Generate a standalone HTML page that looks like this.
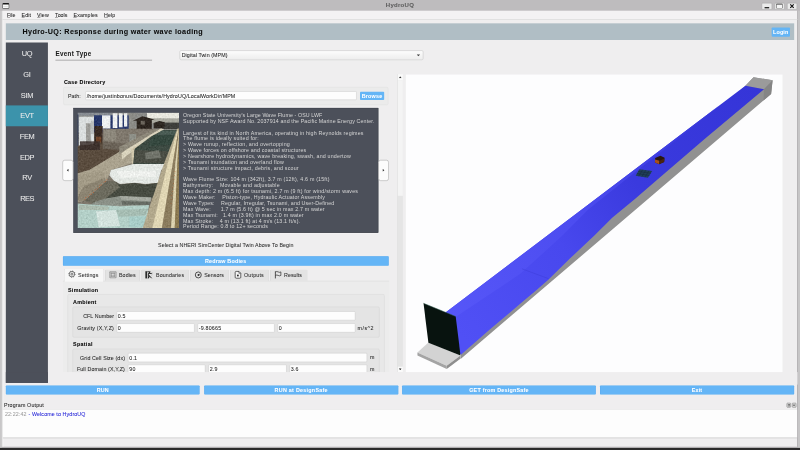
<!DOCTYPE html>
<html><head><meta charset="utf-8"><title>HydroUQ</title>
<style>
html,body{margin:0;padding:0;background:#bdbdbd;overflow:hidden;}
body{width:800px;height:450px;font-family:"Liberation Sans",sans-serif;}
#root{position:absolute;left:0;top:0;width:1920px;height:1080px;transform:scale(0.4166667);transform-origin:0 0;overflow:hidden;}
.b{position:absolute;}
.t{position:absolute;white-space:pre;line-height:1;font-family:"Liberation Sans",sans-serif;-webkit-text-stroke:0.12px currentColor;}
</style></head><body><div id="root">
<div class="b" style="left:0.00px;top:0.00px;width:1920.00px;height:1080.00px;background:#bebcbe;"></div>
<div class="b" style="left:6.00px;top:25.68px;width:1906.56px;height:1046.16px;background:#efeeef;"></div>
<div class="b" style="left:1912.56px;top:25.68px;width:2.16px;height:1046.16px;background:#b2b0b2;"></div>
<div class="b" style="left:0.00px;top:25.68px;width:3.84px;height:1049.52px;background:#c8c7c8;"></div>
<div class="b" style="left:3.84px;top:25.68px;width:2.64px;height:1046.16px;background:#dcdbdc;"></div>
<div class="b" style="left:6.48px;top:25.68px;width:1.44px;height:1046.16px;background:#f8f8f8;"></div>
<div class="b" style="left:1914.72px;top:25.68px;width:5.28px;height:1049.52px;background:#c6c5c6;"></div>
<div class="b" style="left:7.92px;top:25.68px;width:1904.64px;height:20.64px;background:#f3f2f3;"></div>
<div class="b" style="left:0.00px;top:1075.20px;width:1920.00px;height:4.80px;background:#2b2b2b;"></div>
<div class="t" style="left:926.08px;top:5.29px;font-size:14.45px;letter-spacing:0.631px;color:#5c5c5c;font-weight:bold;">HydroUQ</div>
<div class="b" style="left:5.52px;top:6.72px;width:16.80px;height:14.64px;background:#fafafa;border:1.56px solid #1a1a1a;border-radius:2.40px;border-top-width:4.56px;box-sizing:border-box;"></div>
<div class="b" style="left:8.16px;top:15.12px;width:11.52px;height:1.20px;background:#c8c8c8;"></div>
<div class="b" style="left:1827.60px;top:6.72px;width:25.20px;height:16.56px;background:#ebebeb;border:1.08px solid #9c9c9c;border-radius:2.16px;box-sizing:border-box;"></div>
<div class="b" style="left:1858.80px;top:6.72px;width:24.00px;height:16.56px;background:#ebebeb;border:1.08px solid #9c9c9c;border-radius:2.16px;box-sizing:border-box;"></div>
<div class="b" style="left:1888.80px;top:6.72px;width:24.00px;height:16.56px;background:#ebebeb;border:1.08px solid #9c9c9c;border-radius:2.16px;box-sizing:border-box;"></div>
<div class="b" style="left:1835.04px;top:17.28px;width:10.56px;height:2.88px;background:#1c1c1c;"></div>
<div class="b" style="left:1863.12px;top:9.36px;width:15.12px;height:10.32px;background:#f4f4f4;border:1.44px solid #222;box-sizing:border-box;border-top-width:2.88px;border-radius:1.2px"></div>
<svg class="b" style="left:1895.04px;top:9.36px;width:11.52px;height:11.52px" viewBox="0 0 5 5"><path d="M0.7 0.7L4.3 4.3M4.3 0.7L0.7 4.3" stroke="#141414" stroke-width="1.25"/></svg>
<div class="b" style="left:6.00px;top:46.32px;width:1908.00px;height:1.68px;background:#dedede;"></div>
<div class="t" style="left:16.80px;top:30.75px;font-size:12.72px;letter-spacing:-0.104px;color:#222;">File</div>
<div class="b" style="left:16.80px;top:42.48px;width:6.90px;height:0.96px;background:#444;"></div>
<div class="t" style="left:51.60px;top:30.75px;font-size:12.72px;letter-spacing:0.330px;color:#222;">Edit</div>
<div class="b" style="left:51.60px;top:42.48px;width:7.58px;height:0.96px;background:#444;"></div>
<div class="t" style="left:88.80px;top:30.75px;font-size:12.72px;letter-spacing:0.284px;color:#222;">View</div>
<div class="b" style="left:88.80px;top:42.48px;width:8.21px;height:0.96px;background:#444;"></div>
<div class="t" style="left:132.00px;top:30.75px;font-size:12.72px;letter-spacing:-0.027px;color:#222;">Tools</div>
<div class="b" style="left:132.00px;top:42.48px;width:7.33px;height:0.96px;background:#444;"></div>
<div class="t" style="left:176.40px;top:30.75px;font-size:12.72px;letter-spacing:0.308px;color:#222;">Examples</div>
<div class="b" style="left:176.40px;top:42.48px;width:7.58px;height:0.96px;background:#444;"></div>
<div class="t" style="left:249.60px;top:30.75px;font-size:12.72px;letter-spacing:0.299px;color:#222;">Help</div>
<div class="b" style="left:249.60px;top:42.48px;width:9.02px;height:0.96px;background:#444;"></div>
<div class="b" style="left:14.40px;top:56.40px;width:1891.20px;height:39.60px;background:#b0bec5;"></div>
<div class="t" style="left:54.00px;top:68.24px;font-size:17.20px;letter-spacing:0.882px;color:#0a0a0a;font-weight:bold;">Hydro-UQ: Response during water wave loading</div>
<div class="b" style="left:1851.60px;top:66.00px;width:44.40px;height:21.60px;background:#64b5f6;border-radius:1.92px;"></div>
<div class="t" style="left:1855.23px;top:72.36px;font-size:12.90px;letter-spacing:0.407px;color:#fff;font-weight:bold;">Login</div>
<div class="b" style="left:14.40px;top:102.00px;width:100.80px;height:817.20px;background:#4c505a;"></div>
<div class="b" style="left:14.40px;top:252.72px;width:100.80px;height:50.40px;background:#3c93ab;"></div>
<div class="t" style="left:52.04px;top:120.53px;font-size:17.81px;letter-spacing:-0.596px;color:#ececec;">UQ</div>
<div class="t" style="left:55.81px;top:170.33px;font-size:17.81px;letter-spacing:-0.413px;color:#ececec;">GI</div>
<div class="t" style="left:49.74px;top:220.13px;font-size:17.81px;letter-spacing:-0.516px;color:#ececec;">SIM</div>
<div class="t" style="left:48.61px;top:269.93px;font-size:17.81px;letter-spacing:-0.755px;color:#ececec;">EVT</div>
<div class="t" style="left:47.41px;top:319.73px;font-size:17.81px;letter-spacing:-0.939px;color:#ececec;">FEM</div>
<div class="t" style="left:47.96px;top:369.53px;font-size:17.81px;letter-spacing:-0.978px;color:#ececec;">EDP</div>
<div class="t" style="left:53.68px;top:419.33px;font-size:17.81px;letter-spacing:-1.085px;color:#ececec;">RV</div>
<div class="t" style="left:48.32px;top:469.13px;font-size:17.81px;letter-spacing:-1.222px;color:#ececec;">RES</div>
<div class="t" style="left:133.20px;top:121.66px;font-size:15.05px;letter-spacing:0.707px;color:#1a1a1a;font-weight:bold;">Event Type</div>
<div class="b" style="left:133.20px;top:143.04px;width:231.60px;height:3.12px;background:#b9b9b9;"></div>
<div class="b" style="left:430.56px;top:120.72px;width:585.60px;height:22.80px;background:linear-gradient(#fdfdfd,#ededed);border:1.08px solid #bcbcbc;border-radius:3.60px;box-sizing:border-box;"></div>
<div class="t" style="left:436.08px;top:126.51px;font-size:12.72px;letter-spacing:0.192px;color:#222;">Digital Twin (MPM)</div>
<svg class="b" style="left:1000.32px;top:129.60px;width:8.40px;height:5.52px" viewBox="0 0 3.5 2.3"><path d="M0 0H3.5L1.75 2.3Z" fill="#4a4a4a"/></svg>
<div class="b" style="left:954.24px;top:178.32px;width:12.72px;height:714.48px;background:#e5e5e5;"></div>
<div class="b" style="left:954.24px;top:193.20px;width:12.72px;height:277.20px;background:#f4f4f4;"></div>
<div class="b" style="left:954.24px;top:178.32px;width:12.72px;height:14.64px;background:#fafafa;"></div>
<div class="b" style="left:954.24px;top:880.08px;width:12.72px;height:12.72px;background:#fafafa;"></div>
<div class="b" style="left:953.52px;top:178.32px;width:1.20px;height:714.48px;background:#d8d8d8;"></div>
<svg class="b" style="left:957.12px;top:183.12px;width:7.20px;height:4.80px" viewBox="0 0 3 2"><path d="M0 2H3L1.5 0Z" fill="#333"/></svg>
<svg class="b" style="left:957.12px;top:883.68px;width:7.20px;height:4.80px" viewBox="0 0 3 2"><path d="M0 0H3L1.5 2Z" fill="#333"/></svg>
<div class="t" style="left:153.60px;top:191.88px;font-size:12.90px;letter-spacing:0.591px;color:#000;font-weight:bold;">Case Directory</div>
<div class="b" style="left:152.40px;top:208.80px;width:780.00px;height:43.20px;background:#ebebeb;border:0.96px solid #dddddd;border-radius:3.60px;box-sizing:border-box;"></div>
<div class="t" style="left:163.20px;top:224.43px;font-size:12.72px;letter-spacing:0.141px;color:#242424;">Path:</div>
<div class="b" style="left:205.20px;top:218.88px;width:650.40px;height:21.60px;background:#fdfdfd;border:0.96px solid #c2c2c2;border-radius:2.40px;box-sizing:border-box;"></div>
<div class="t" style="left:208.08px;top:224.43px;font-size:12.72px;letter-spacing:0.315px;color:#222;">/home/justinbonus/Documents/HydroUQ/LocalWorkDir/MPM</div>
<div class="b" style="left:864.00px;top:219.60px;width:57.60px;height:20.40px;background:#64b5f6;border-radius:1.92px;"></div>
<div class="t" style="left:867.96px;top:224.28px;font-size:12.90px;letter-spacing:0.513px;color:#fff;font-weight:bold;">Browse</div>
<div class="b" style="left:175.20px;top:258.24px;width:734.40px;height:301.92px;background:#fafafa;"></div>
<div class="b" style="left:176.40px;top:259.20px;width:732.00px;height:299.52px;background:#4c505a;border:1.2px solid #3a3d45;box-sizing:border-box;"></div>
<svg class="b" style="left:186.00px;top:270.00px;width:243.60px;height:277.20px" viewBox="0 0 101.5 115.5" preserveAspectRatio="none">
<defs><filter id="pb" x="-5%" y="-5%" width="110%" height="110%" color-interpolation-filters="sRGB"><feGaussianBlur in="SourceGraphic" stdDeviation="0.7" result="b"/><feTurbulence type="fractalNoise" baseFrequency="0.55" numOctaves="2" seed="7" result="n"/><feColorMatrix in="n" type="matrix" values="0.4 0.4 0.2 0 0  0.4 0.4 0.2 0 0  0.4 0.4 0.2 0 0  0 0 0 0 1" result="g"/><feComposite in="b" in2="g" operator="arithmetic" k1="0" k2="1" k3="0.28" k4="-0.14"/></filter><clipPath id="pc"><rect x="0" y="0" width="101.5" height="115.5"/></clipPath></defs>
<g clip-path="url(#pc)"><g filter="url(#pb)">
<rect x="-2.0" y="-2.0" width="105.5" height="119.5" fill="#7d766a"/>
<rect x="-2.0" y="-2.0" width="105.5" height="22.0" fill="#8c8d8a"/>
<rect x="-2.0" y="-2.0" width="37.0" height="5.2" fill="#878c92"/>
<rect x="1.4" y="4.2" width="15.1" height="28.7" fill="#d9dddd"/>
<rect x="-1.0" y="2.0" width="1.8" height="44.0" fill="#1f2f5e"/>
<rect x="8.5" y="10.8" width="4.7" height="20.0" fill="#9c9c98"/>
<rect x="13.4" y="8.2" width="3.1" height="13.3" fill="#b9bcbc"/>
<rect x="16.5" y="2.8" width="36.0" height="17.0" fill="#26366a"/>
<rect x="24.5" y="2.8" width="8.4" height="13.3" fill="#eef0f0"/>
<rect x="35.2" y="0.8" width="4.7" height="14.7" fill="#eef0f0"/>
<rect x="41.4" y="0.8" width="3.7" height="14.0" fill="#eef0f0"/>
<rect x="46.5" y="0.8" width="3.3" height="13.3" fill="#eef0f0"/>
<rect x="16.9" y="13.5" width="8.3" height="24.0" fill="#3a2c24"/>
<rect x="18.5" y="24.2" width="5.3" height="13.3" fill="#7a4a2a" opacity="0.8"/>
<rect x="51.2" y="0.8" width="6.7" height="16.7" fill="#8b8b86"/>
<rect x="69.5" y="0.3" width="32.9" height="5.9" fill="#e9e8df"/>
<rect x="74.0" y="6.0" width="28.4" height="4.9" fill="#a9a99f"/>
<rect x="86.3" y="10.1" width="16.1" height="6.5" fill="#3e3e3a"/>
<polygon points="55.3,8.3 65.0,3.8 77.2,7.0 74.3,7.5 74.3,17.0 59.2,17.0 59.2,8.3" fill="#2c251f"/>
<rect x="63.2" y="8.3" width="4.1" height="3.9" fill="#7a746a" opacity="0.8"/>
<polygon points="76.0,10.5 81.8,8.5 87.2,9.8 86.9,15.9 76.3,15.9" fill="#2e2822"/>
<polygon points="25.2,16.2 78.5,16.2 73.2,22.2 51.8,33.5 25.2,30.8" fill="#7f786d"/>
<rect x="51.8" y="21.5" width="6.7" height="10.7" fill="#8e9088"/>
<rect x="26.5" y="17.5" width="12.0" height="10.7" fill="#8d887c"/>
<polygon points="0.1,33.5 16.5,31.5 25.2,29.5 51.8,32.4 37.2,42.2 11.8,57.5 0.5,60.8 -4.2,61.5 -4.2,33.5" fill="#5a4c3e"/>
<polygon points="25.2,28.8 51.8,31.5 42.5,37.5 25.2,36.2" fill="#6b6358"/>
<rect x="2.5" y="28.8" width="20.0" height="8.7" fill="#3a2e2a" opacity="0.85"/>
<polygon points="83.8,15.9 85.8,17.5 67.8,29.5 55.8,36.2 54.5,50.8 33.4,57.5 29.2,68.2 6.5,88.2 -4.2,90.8 -4.2,61.5 0.5,60.8 11.8,57.5 37.2,42.2 51.8,32.4 73.2,21.5" fill="#aaa28e"/>
<polygon points="83.3,16.0 49.5,36.5 41.8,42.1 41.8,34.3 49.5,30.5 75.3,17.3" fill="#8e897b"/>
<polygon points="83.3,15.9 86.5,17.0 57.5,37.2 49.5,42.7 44.3,47.2 44.3,40.5 49.5,36.7" fill="#d8d2bc"/>
<polygon points="0.5,62.8 25.2,58.8 28.5,67.5 6.5,87.5 -4.2,90.2" fill="#a29a86"/>
<polygon points="6.5,73.5 27.2,65.5 28.5,68.2 6.5,87.9 -2.8,89.5" fill="#8c8472"/>
<polygon points="85.2,17.2 73.2,24.2 57.2,36.2 55.8,50.8 54.5,51.5 53.8,36.2 67.8,28.8" fill="#cfc5aa"/>
<polygon points="85.8,17.5 100.5,17.5 97.2,28.2 91.8,37.5 90.5,52.2 55.8,52.2 57.2,36.2 73.2,24.2" fill="#3d4a42"/>
<polygon points="75.8,22.8 97.2,22.2 94.5,32.2 70.5,33.5" fill="#34483f" opacity="0.9"/>
<polygon points="83.8,18.2 99.2,18.2 97.8,22.2 78.5,22.2" fill="#4f625a" opacity="0.8"/>
<polygon points="57.2,37.5 90.5,38.8 89.2,50.8 56.5,50.8" fill="#4a4d44"/>
<polygon points="67.8,40.2 81.2,37.5 83.8,45.5 67.8,46.8" fill="#7a7e76" opacity="0.8"/>
<polygon points="55.8,51.5 90.5,51.5 83.8,57.5 80.5,70.2 67.8,71.5 57.2,70.2 42.5,71.5 36.5,68.2 31.8,62.8 33.4,57.5" fill="#e3e7e3"/>
<polygon points="38.5,58.2 78.5,58.2 78.5,64.2 42.5,65.5" fill="#f0f2ef" opacity="0.8"/>
<polygon points="36.5,68.8 42.5,71.9 57.2,70.6 67.8,71.9 80.1,70.6 76.5,84.2 73.2,86.2 42.5,84.2 27.2,86.2 28.5,72.2" fill="#474b41"/>
<polygon points="28.5,68.8 37.2,68.8 42.5,74.8 27.8,86.2 15.8,90.8 6.5,88.4" fill="#6c6b5e"/>
<polygon points="27.2,86.2 42.5,83.5 73.2,85.8 71.8,92.8 42.5,94.2 11.8,92.4 17.2,89.5" fill="#8b9188"/>
<polygon points="42.5,83.5 73.8,84.8 73.2,88.8 43.8,87.1" fill="#a8ada4" opacity="0.9"/>
<polygon points="43.8,88.4 73.2,89.5 72.1,92.4 44.5,92.2" fill="#5d625a" opacity="0.8"/>
<polygon points="-4.2,90.8 11.8,91.9 42.5,93.8 71.6,92.4 67.8,116.2 -4.2,116.2" fill="#b3cfc7"/>
<polygon points="18.5,98.8 38.5,97.5 42.5,113.5 21.2,114.8" fill="#d6e3df" opacity="0.9"/>
<polygon points="1.2,92.2 31.8,94.2 30.5,97.5 1.2,97.5" fill="#a9b5a8" opacity="0.8"/>
<polygon points="38.5,97.5 70.5,96.2 68.5,102.8 41.2,104.2" fill="#9fb3aa" opacity="0.7"/>
<polygon points="51.8,104.2 68.5,103.5 67.2,114.8 51.8,114.8" fill="#a5cbc6" opacity="0.9"/>
<polygon points="99.8,16.2 103.0,16.2 103.0,117.0 64.8,117.0 65.2,115.5 86.0,52.5" fill="#b2a88c"/>
<polygon points="100.3,16.2 101.2,16.2 95.0,52.5 84.5,115.5 84.2,117.0 74.6,117.0 74.9,115.5 89.8,52.5" fill="#e0d6b4"/>
<polygon points="101.2,16.2 101.6,16.2 97.7,52.5 93.5,117.0 84.2,117.0 95.0,52.5" fill="#8b7c5e"/>
<polygon points="101.6,16.2 102.0,16.2 99.7,52.5 97.2,117.0 93.5,117.0 97.7,52.5" fill="#dad0ae"/>
<polygon points="102.0,16.2 104.0,16.2 104.0,117.0 97.2,117.0 99.7,52.5" fill="#8a7850"/>
</g>
<rect x="29.0" y="66.9" width="0.8" height="0.8" fill="#c4501c" opacity="0.85"/>
<rect x="27.5" y="68.5" width="0.8" height="0.8" fill="#c4501c" opacity="0.85"/>
<rect x="26.1" y="69.2" width="0.8" height="0.8" fill="#c4501c" opacity="0.85"/>
<rect x="23.4" y="72.0" width="0.8" height="0.8" fill="#c4501c" opacity="0.85"/>
<rect x="22.0" y="72.6" width="0.8" height="0.8" fill="#c4501c" opacity="0.85"/>
<rect x="21.4" y="74.5" width="0.8" height="0.8" fill="#c4501c" opacity="0.85"/>
<rect x="19.4" y="76.0" width="0.8" height="0.8" fill="#c4501c" opacity="0.85"/>
<rect x="17.3" y="77.0" width="0.8" height="0.8" fill="#c4501c" opacity="0.85"/>
<rect x="15.5" y="79.7" width="0.8" height="0.8" fill="#c4501c" opacity="0.85"/>
<rect x="13.6" y="81.1" width="0.8" height="0.8" fill="#c4501c" opacity="0.85"/>
<rect x="12.1" y="81.5" width="0.8" height="0.8" fill="#c4501c" opacity="0.85"/>
<rect x="10.4" y="83.9" width="0.8" height="0.8" fill="#c4501c" opacity="0.85"/>
<rect x="7.9" y="84.5" width="0.8" height="0.8" fill="#c4501c" opacity="0.85"/>
<rect x="7.1" y="86.8" width="0.8" height="0.8" fill="#c4501c" opacity="0.85"/>
<rect x="97.1" y="58.8" width="0.7" height="0.7" fill="#b8501c" opacity="0.7"/>
<rect x="96.7" y="62.8" width="0.7" height="0.7" fill="#b8501c" opacity="0.7"/>
<rect x="96.1" y="66.8" width="0.7" height="0.7" fill="#b8501c" opacity="0.7"/>
<rect x="95.7" y="70.8" width="0.7" height="0.7" fill="#b8501c" opacity="0.7"/>
<rect x="94.8" y="74.8" width="0.7" height="0.7" fill="#b8501c" opacity="0.7"/>
<rect x="94.6" y="78.8" width="0.7" height="0.7" fill="#b8501c" opacity="0.7"/>
<rect x="93.9" y="82.8" width="0.7" height="0.7" fill="#b8501c" opacity="0.7"/>
<rect x="93.7" y="86.8" width="0.7" height="0.7" fill="#b8501c" opacity="0.7"/>
<rect x="93.2" y="90.8" width="0.7" height="0.7" fill="#b8501c" opacity="0.7"/>
</g></svg>
<div class="t" style="left:439.20px;top:270.99px;font-size:12.72px;letter-spacing:0.229px;color:#d6d6d6;white-space:pre;-webkit-text-stroke:0;">Oregon State University's Large Wave Flume - OSU LWF</div>
<div class="t" style="left:439.20px;top:285.03px;font-size:12.72px;letter-spacing:0.309px;color:#d6d6d6;white-space:pre;-webkit-text-stroke:0;">Supported by NSF Award No. 2037914 and the Pacific Marine Energy Center.</div>
<div class="t" style="left:439.20px;top:313.11px;font-size:12.72px;letter-spacing:0.415px;color:#d6d6d6;white-space:pre;-webkit-text-stroke:0;">Largest of its kind in North America, operating in high Reynolds regimes</div>
<div class="t" style="left:439.20px;top:327.15px;font-size:12.72px;letter-spacing:0.426px;color:#d6d6d6;white-space:pre;-webkit-text-stroke:0;">The flume is ideally suited for:</div>
<div class="t" style="left:439.20px;top:341.19px;font-size:12.72px;letter-spacing:0.506px;color:#d6d6d6;white-space:pre;-webkit-text-stroke:0;">&gt; Wave runup, reflection, and overtopping</div>
<div class="t" style="left:439.20px;top:355.23px;font-size:12.72px;letter-spacing:0.419px;color:#d6d6d6;white-space:pre;-webkit-text-stroke:0;">&gt; Wave forces on offshore and coastal structures</div>
<div class="t" style="left:439.20px;top:369.27px;font-size:12.72px;letter-spacing:0.446px;color:#d6d6d6;white-space:pre;-webkit-text-stroke:0;">&gt; Nearshore hydrodynamics, wave breaking, swash, and undertow</div>
<div class="t" style="left:439.20px;top:383.31px;font-size:12.72px;letter-spacing:0.495px;color:#d6d6d6;white-space:pre;-webkit-text-stroke:0;">&gt; Tsunami inundation and overland flow</div>
<div class="t" style="left:439.20px;top:397.35px;font-size:12.72px;letter-spacing:0.471px;color:#d6d6d6;white-space:pre;-webkit-text-stroke:0;">&gt; Tsunami structure impact, debris, and scour</div>
<div class="t" style="left:439.20px;top:425.43px;font-size:12.72px;letter-spacing:0.445px;color:#d6d6d6;white-space:pre;-webkit-text-stroke:0;">Wave Flume Size: 104 m (342ft), 3.7 m (12ft), 4.6 m (15ft)</div>
<div class="t" style="left:439.20px;top:439.47px;font-size:12.72px;letter-spacing:0.436px;color:#d6d6d6;white-space:pre;-webkit-text-stroke:0;">Bathymetry:    Movable and adjustable</div>
<div class="t" style="left:439.20px;top:453.51px;font-size:12.72px;letter-spacing:0.494px;color:#d6d6d6;white-space:pre;-webkit-text-stroke:0;">Max depth: 2 m (6.5 ft) for tsunami, 2.7 m (9 ft) for wind/storm waves</div>
<div class="t" style="left:439.20px;top:467.55px;font-size:12.72px;letter-spacing:0.373px;color:#d6d6d6;white-space:pre;-webkit-text-stroke:0;">Wave Maker:    Piston-type, Hydraulic Actuator Assembly</div>
<div class="t" style="left:439.20px;top:481.59px;font-size:12.72px;letter-spacing:0.295px;color:#d6d6d6;white-space:pre;-webkit-text-stroke:0;">Wave Types:    Regular, Irregular, Tsunami, and User-Defined</div>
<div class="t" style="left:439.20px;top:495.63px;font-size:12.72px;letter-spacing:0.402px;color:#d6d6d6;white-space:pre;-webkit-text-stroke:0;">Max Wave:      1.7 m (5.6 ft) @ 5 sec in max 2.7 m water</div>
<div class="t" style="left:439.20px;top:509.67px;font-size:12.72px;letter-spacing:0.460px;color:#d6d6d6;white-space:pre;-webkit-text-stroke:0;">Max Tsunami:   1.4 m (3.9ft) in max 2.0 m water</div>
<div class="t" style="left:439.20px;top:523.71px;font-size:12.72px;letter-spacing:0.425px;color:#d6d6d6;white-space:pre;-webkit-text-stroke:0;">Max Stroke:    4 m (13.1 ft) at 4 m/s (13.1 ft/s).</div>
<div class="t" style="left:439.20px;top:537.75px;font-size:12.72px;letter-spacing:0.355px;color:#d6d6d6;white-space:pre;-webkit-text-stroke:0;">Period Range: 0.8 to 12+ seconds</div>
<div class="b" style="left:149.52px;top:383.52px;width:26.64px;height:50.40px;background:#fcfcfc;border:1.7999999999999998px solid #909090;border-radius:5.52px;box-sizing:border-box;"></div>
<svg class="b" style="left:160.44px;top:404.64px;width:4.80px;height:7.20px" viewBox="0 0 2 3"><path d="M2 0L0 1.5L2 3Z" fill="#333"/></svg>
<div class="b" style="left:908.16px;top:383.52px;width:24.96px;height:50.40px;background:#fcfcfc;border:1.7999999999999998px solid #909090;border-radius:5.52px;box-sizing:border-box;"></div>
<svg class="b" style="left:918.24px;top:404.64px;width:4.80px;height:7.20px" viewBox="0 0 2 3"><path d="M0 0L2 1.5L0 3Z" fill="#333"/></svg>
<div class="t" style="left:379.20px;top:582.51px;font-size:12.72px;letter-spacing:0.240px;color:#2a2a2a;">Select a NHERI SimCenter Digital Twin Above To Begin</div>
<div class="b" style="left:151.20px;top:615.36px;width:781.92px;height:22.32px;background:#64b5f6;border-radius:1.92px;box-shadow:inset 0 0 0 1px #58a8ec;"></div>
<div class="t" style="left:492.00px;top:620.52px;font-size:12.90px;letter-spacing:0.493px;color:#fff;font-weight:bold;">Redraw Bodies</div>
<div class="b" style="left:151.20px;top:674.40px;width:782.40px;height:218.40px;background:#ececec;"></div>
<div class="b" style="left:151.20px;top:674.40px;width:782.40px;height:0.96px;background:#d4d4d4;"></div>
<div class="b" style="left:153.60px;top:644.64px;width:95.04px;height:31.20px;background:#f7f7f7;border:0.96px solid #d6d6d6;border-radius:2.40px;box-sizing:border-box;border-bottom:none;"></div>
<div class="t" style="left:187.20px;top:654.51px;font-size:12.72px;letter-spacing:0.407px;color:#2a2a2a;">Settings</div>
<div class="b" style="left:251.52px;top:646.56px;width:84.96px;height:27.36px;background:#e3e3e3;border:0.96px solid #d0d0d0;border-radius:2.40px;box-sizing:border-box;border-bottom:none;"></div>
<div class="t" style="left:285.60px;top:654.51px;font-size:12.72px;letter-spacing:0.211px;color:#2a2a2a;">Bodies</div>
<div class="b" style="left:339.36px;top:646.56px;width:114.72px;height:27.36px;background:#e3e3e3;border:0.96px solid #d0d0d0;border-radius:2.40px;box-sizing:border-box;border-bottom:none;"></div>
<div class="t" style="left:374.40px;top:654.51px;font-size:12.72px;letter-spacing:0.331px;color:#2a2a2a;">Boundaries</div>
<div class="b" style="left:456.48px;top:646.56px;width:93.60px;height:27.36px;background:#e3e3e3;border:0.96px solid #d0d0d0;border-radius:2.40px;box-sizing:border-box;border-bottom:none;"></div>
<div class="t" style="left:490.32px;top:654.51px;font-size:12.72px;letter-spacing:0.103px;color:#2a2a2a;">Sensors</div>
<div class="b" style="left:552.48px;top:646.56px;width:93.60px;height:27.36px;background:#e3e3e3;border:0.96px solid #d0d0d0;border-radius:2.40px;box-sizing:border-box;border-bottom:none;"></div>
<div class="t" style="left:585.60px;top:654.51px;font-size:12.72px;letter-spacing:0.485px;color:#2a2a2a;">Outputs</div>
<div class="b" style="left:648.48px;top:646.56px;width:89.76px;height:27.36px;background:#e3e3e3;border:0.96px solid #d0d0d0;border-radius:2.40px;box-sizing:border-box;border-bottom:none;"></div>
<div class="t" style="left:681.60px;top:654.51px;font-size:12.72px;letter-spacing:0.131px;color:#2a2a2a;">Results</div>
<svg class="b" style="left:144.00px;top:638.40px;width:624.00px;height:43.20px" viewBox="60 266 260 18">
<circle cx="71.9" cy="274.3" r="2.75" fill="none" stroke="#2a2a2a" stroke-width="0.6"/>
<circle cx="71.9" cy="274.3" r="3.2" fill="none" stroke="#2a2a2a" stroke-width="0.55" stroke-dasharray="0.9 1.61"/>
<circle cx="71.9" cy="274.3" r="1.05" fill="none" stroke="#2a2a2a" stroke-width="0.6"/>
<rect x="109.3" y="271.4" width="7.2" height="7.1" rx="1" fill="#9a9a9a"/>
<rect x="110.3" y="272.4" width="5.2" height="5.1" rx="0.5" fill="none" stroke="#d8d8d8" stroke-width="0.5"/>
<path d="M112.9,272.4 V277.5 M110.3,274.9 H115.5" stroke="#d0d0d0" stroke-width="0.5"/>
<circle cx="112.9" cy="274.9" r="0.8" fill="#e8e8e8"/>
<rect x="145.4" y="271.4" width="1.5" height="7.2" fill="#1a1a1a"/>
<path d="M147.2,272 H150.2 L148.6,273.6 H151.8 M148.3,273.4 L148.3,278.4 M148.5,275 L151.6,278.4 M149.6,276.3 L148.2,278.5" stroke="#1a1a1a" stroke-width="0.95" fill="none"/>
<path d="M152.6,272.6 L151.6,276" stroke="#999" stroke-width="0.4"/>
<circle cx="198.3" cy="275.1" r="3.0" fill="none" stroke="#2a2a2a" stroke-width="0.8"/>
<circle cx="198.5" cy="275.1" r="1.0" fill="#2a2a2a"/>
<path d="M198.3,275.1 L200.10000000000002,274.0" stroke="#2a2a2a" stroke-width="0.6"/>
<path d="M236.2,271.6 H239 L240.8,273.4 V277.4 Q240.8,278.4 239.8,278.4 H236.2 Q235.2,278.4 235.2,277.4 V272.6 Q235.2,271.6 236.2,271.6 Z" fill="#f4f4f4" stroke="#2a2a2a" stroke-width="0.7"/>
<path d="M238.9,271.7 V273.5 H240.7" fill="none" stroke="#2a2a2a" stroke-width="0.5"/>
<circle cx="237.9" cy="275.7" r="0.95" fill="#2a2a2a"/>
<path d="M275.4,271.5 V278.6" stroke="#2a2a2a" stroke-width="0.8"/>
<path d="M275.5,272.1 Q276.9,271.3 278.2,272.1 T280.9,272.1 V275.6 Q279.5,276.4 278.2,275.6 T275.5,275.6" fill="none" stroke="#2a2a2a" stroke-width="0.7"/>
</svg>
<div class="t" style="left:163.20px;top:689.88px;font-size:12.90px;letter-spacing:0.672px;color:#000;font-weight:bold;">Simulation</div>
<div class="b" style="left:162.00px;top:705.60px;width:760.80px;height:206.40px;background:#e8e8e8;border:0.96px solid #d6d6d6;border-radius:3.60px;box-sizing:border-box;"></div>
<div class="t" style="left:175.20px;top:719.88px;font-size:12.90px;letter-spacing:0.759px;color:#000;font-weight:bold;">Ambient</div>
<div class="b" style="left:174.00px;top:735.60px;width:736.80px;height:74.40px;background:#e4e4e4;border:0.96px solid #d2d2d2;border-radius:3.60px;box-sizing:border-box;"></div>
<div class="t" style="left:199.61px;top:752.43px;font-size:12.72px;letter-spacing:0.165px;color:#242424;">CFL Number</div>
<div class="b" style="left:279.60px;top:746.88px;width:573.60px;height:21.84px;background:#fdfdfd;border:0.96px solid #c2c2c2;border-radius:2.40px;box-sizing:border-box;"></div>
<div class="t" style="left:282.72px;top:752.19px;font-size:12.72px;letter-spacing:0.467px;color:#222;">0.5</div>
<div class="t" style="left:185.19px;top:781.23px;font-size:12.72px;letter-spacing:0.397px;color:#242424;">Gravity (X,Y,Z)</div>
<div class="b" style="left:279.60px;top:775.68px;width:187.20px;height:21.84px;background:#fdfdfd;border:0.96px solid #c2c2c2;border-radius:2.40px;box-sizing:border-box;"></div>
<div class="t" style="left:282.72px;top:780.99px;font-size:12.72px;letter-spacing:0.560px;color:#222;">0</div>
<div class="b" style="left:474.00px;top:775.68px;width:184.80px;height:21.84px;background:#fdfdfd;border:0.96px solid #c2c2c2;border-radius:2.40px;box-sizing:border-box;"></div>
<div class="t" style="left:477.12px;top:780.99px;font-size:12.72px;letter-spacing:0.467px;color:#222;">-9.80665</div>
<div class="b" style="left:666.00px;top:775.68px;width:187.20px;height:21.84px;background:#fdfdfd;border:0.96px solid #c2c2c2;border-radius:2.40px;box-sizing:border-box;"></div>
<div class="t" style="left:669.12px;top:780.99px;font-size:12.72px;letter-spacing:0.560px;color:#222;">0</div>
<div class="t" style="left:858.00px;top:781.23px;font-size:12.72px;letter-spacing:1.228px;color:#242424;">m/s^2</div>
<div class="t" style="left:175.20px;top:820.92px;font-size:12.90px;letter-spacing:0.728px;color:#000;font-weight:bold;">Spatial</div>
<div class="b" style="left:174.00px;top:836.64px;width:736.80px;height:75.36px;background:#e4e4e4;border:0.96px solid #d2d2d2;border-radius:3.60px;box-sizing:border-box;"></div>
<div class="t" style="left:192.23px;top:852.75px;font-size:12.72px;letter-spacing:0.241px;color:#242424;">Grid Cell Size (dx)</div>
<div class="b" style="left:307.20px;top:847.20px;width:573.60px;height:21.36px;background:#fdfdfd;border:0.96px solid #c2c2c2;border-radius:2.40px;box-sizing:border-box;"></div>
<div class="t" style="left:310.32px;top:852.51px;font-size:12.72px;letter-spacing:0.467px;color:#222;">0.1</div>
<div class="t" style="left:888.00px;top:852.03px;font-size:12.72px;letter-spacing:1.093px;color:#242424;">m</div>
<div class="t" style="left:184.52px;top:880.59px;font-size:12.72px;letter-spacing:0.286px;color:#242424;">Full Domain (X,Y,Z)</div>
<div class="b" style="left:307.20px;top:875.28px;width:186.00px;height:21.84px;background:#fdfdfd;border:0.96px solid #c2c2c2;border-radius:2.40px;box-sizing:border-box;"></div>
<div class="t" style="left:310.32px;top:880.59px;font-size:12.72px;letter-spacing:0.560px;color:#222;">90</div>
<div class="b" style="left:500.40px;top:875.28px;width:187.20px;height:21.84px;background:#fdfdfd;border:0.96px solid #c2c2c2;border-radius:2.40px;box-sizing:border-box;"></div>
<div class="t" style="left:503.52px;top:880.59px;font-size:12.72px;letter-spacing:0.467px;color:#222;">2.9</div>
<div class="b" style="left:694.80px;top:875.28px;width:186.00px;height:21.84px;background:#fdfdfd;border:0.96px solid #c2c2c2;border-radius:2.40px;box-sizing:border-box;"></div>
<div class="t" style="left:697.92px;top:880.59px;font-size:12.72px;letter-spacing:0.467px;color:#222;">3.6</div>
<div class="t" style="left:888.00px;top:880.59px;font-size:12.72px;letter-spacing:1.093px;color:#242424;">m</div>
<div class="b" style="left:120.00px;top:892.80px;width:1794.00px;height:30.00px;background:#efeeef;"></div>
<div class="b" style="left:14.40px;top:892.80px;width:100.80px;height:26.40px;background:#4c505a;"></div>
<div class="b" style="left:973.68px;top:179.28px;width:903.84px;height:713.28px;background:#fdfdfe;"></div>
<svg class="b" style="left:973.20px;top:178.80px;width:902.40px;height:712.80px" viewBox="405.5 74.5 376.0 297.0">
<defs><linearGradient id="bl" gradientUnits="userSpaceOnUse" x1="456" y1="330" x2="760" y2="90"><stop offset="0" stop-color="#5050f5"/><stop offset="0.35" stop-color="#4848ee"/><stop offset="0.6" stop-color="#3a3ade"/><stop offset="1" stop-color="#3535d8"/></linearGradient><linearGradient id="bt" gradientUnits="userSpaceOnUse" x1="446" y1="310" x2="700" y2="120"><stop offset="0" stop-color="#5656f8"/><stop offset="0.5" stop-color="#4c4cf0"/><stop offset="1" stop-color="#3a3adc"/></linearGradient></defs>
<polygon points="745.5,85.6 753.6,77.2 772.7,80.1 771.2,93.8 461.0,358.7 461.0,354.0" fill="#919191"/>
<polygon points="753.6,77.2 772.7,80.1 764.1,89.1 745.5,85.6" fill="#9b9b9b"/>
<polygon points="772.7,80.1 771.2,93.8 763.6,100.3 764.1,89.1" fill="#858585"/>
<polygon points="438.0,318.2 745.5,85.6 764.1,89.1 705.0,138.7 657.0,180.0 635.0,199.0 612.3,217.7 595.0,235.0 570.0,258.5 548.7,279.3 536.7,290.0 520.0,304.0 489.3,330.0 461.0,354.6 450.0,340.0" fill="url(#bl)"/>
<polygon points="438.0,318.2 720.0,105.0 700.0,121.5 629.7,176.5 588.3,209.5 563.0,235.0 545.0,251.5 520.0,274.0 456.0,316.7 440.0,325.0" fill="url(#bt)"/>
<path d="M522,268.7 L548.7,278.6" stroke="#3a3ad4" stroke-width="0.6" fill="none" opacity="0.7"/>
<polygon points="655.3,158 660.5,155.7 664.7,157.6 664.2,162 659.2,164.2 655,162.3" fill="#2a160c"/>
<polygon points="655.2,159.5 659.6,160.6 659.3,164.2 655,162.4" fill="#a8501c"/>
<polygon points="659.6,160.6 664.4,158.4 664.2,162 659.3,164.2" fill="#4a2410"/>
<polygon points="639.5,169.2 652.3,171 648,177.6 635.7,175.6" fill="#20405a"/>
<path d="M638.2,171.3 L650.9,173.2 M637,173.4 L649.5,175.4 M642.7,169.7 L638.8,176.1 M645.9,170.1 L641.9,176.6 M649.1,170.6 L645,177.1" stroke="#16283a" stroke-width="0.5" fill="none"/>
<polygon points="428.5,342.5 460.6,355.5 446.8,365.6 417.5,352.4" fill="#d3d3d3"/>
<polygon points="417.5,352.4 446.8,365.6 446.8,369.0 417.5,355.3" fill="#a4a4a4"/>
<polygon points="446.8,365.6 460.6,355.5 460.8,358.3 446.8,369.0" fill="#8e8e8e"/>
<polygon points="423.6,303.2 455.8,316.4 460.6,355.3 428.5,342.6" fill="#08130f"/>
<path d="M423.6,303.2 L455.8,316.4" stroke="#2a5a4c" stroke-width="0.5"/>
</svg>
<div class="b" style="left:14.40px;top:925.20px;width:464.40px;height:21.84px;background:#64b5f6;border-radius:1.92px;box-shadow:inset 0 0 0 1px #58a8ec;"></div>
<div class="t" style="left:232.09px;top:930.36px;font-size:12.90px;letter-spacing:0.360px;color:#fff;font-weight:bold;">RUN</div>
<div class="b" style="left:489.60px;top:925.20px;width:466.80px;height:21.84px;background:#64b5f6;border-radius:1.92px;box-shadow:inset 0 0 0 1px #58a8ec;"></div>
<div class="t" style="left:659.10px;top:930.36px;font-size:12.90px;letter-spacing:0.645px;color:#fff;font-weight:bold;">RUN at DesignSafe</div>
<div class="b" style="left:964.80px;top:925.20px;width:465.60px;height:21.84px;background:#64b5f6;border-radius:1.92px;box-shadow:inset 0 0 0 1px #58a8ec;"></div>
<div class="t" style="left:1126.07px;top:930.36px;font-size:12.90px;letter-spacing:0.550px;color:#fff;font-weight:bold;">GET from DesignSafe</div>
<div class="b" style="left:1440.00px;top:925.20px;width:465.60px;height:21.84px;background:#64b5f6;border-radius:1.92px;box-shadow:inset 0 0 0 1px #58a8ec;"></div>
<div class="t" style="left:1659.91px;top:930.36px;font-size:12.90px;letter-spacing:0.532px;color:#fff;font-weight:bold;">Exit</div>
<div class="t" style="left:9.60px;top:966.99px;font-size:12.72px;letter-spacing:0.393px;color:#222;">Program Output</div>
<div class="b" style="left:7.20px;top:982.08px;width:1905.60px;height:1.20px;background:#d0d0d0;"></div>
<div class="b" style="left:7.20px;top:983.28px;width:1905.60px;height:66.96px;background:#fdfdfd;"></div>
<div class="b" style="left:7.20px;top:1050.24px;width:1905.60px;height:1.68px;background:#cfcfcf;"></div>
<div class="t" style="left:12.00px;top:988.83px;font-size:12.72px;letter-spacing:0.261px;color:#9a9a9a;">22:22:42</div>
<div class="t" style="left:68.16px;top:988.83px;font-size:12.72px;letter-spacing:0.094px;color:#2222cc;">-</div>
<div class="t" style="left:76.80px;top:988.83px;font-size:12.72px;letter-spacing:0.274px;color:#2424d8;">Welcome to HydroUQ</div>
<div class="b" style="left:1887.84px;top:967.20px;width:10.56px;height:10.56px;background:#e0e0e0;border:0.96px solid #555;border-radius:1.92px;box-sizing:border-box;"></div>
<div class="b" style="left:1900.80px;top:967.20px;width:10.56px;height:10.56px;background:#e0e0e0;border:0.96px solid #555;border-radius:1.92px;box-sizing:border-box;"></div>
<svg class="b" style="left:1903.44px;top:969.84px;width:5.28px;height:5.28px" viewBox="0 0 2.2 2.2"><path d="M0 0L2.2 2.2M2.2 0L0 2.2" stroke="#333" stroke-width="0.6"/></svg>
<div class="b" style="left:1890.72px;top:970.08px;width:4.80px;height:4.80px;border:0.72px solid #444;box-sizing:border-box;"></div>
</div></body></html>
